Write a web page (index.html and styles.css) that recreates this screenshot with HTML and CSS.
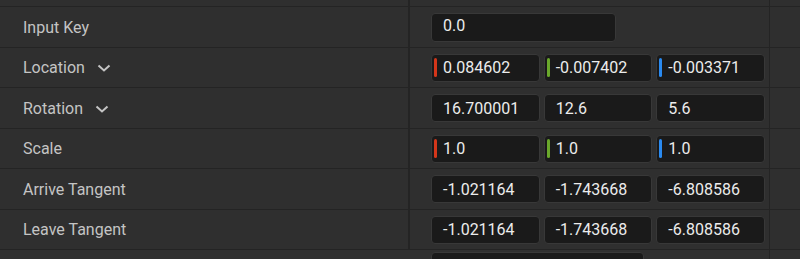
FILE: index.html
```html
<!DOCTYPE html>
<html>
<head>
<meta charset="utf-8">
<link rel="stylesheet" href="styles.css">
</head>
<body>
<div class="panel">
  <div class="row top"><div class="label"></div><div class="value"></div><div class="extra"></div></div>

  <div class="row tall">
    <div class="label">Input Key</div>
    <div class="value"><div class="box key"><span class="num">0.0</span></div></div>
    <div class="extra"></div>
  </div>

  <div class="row">
    <div class="label">Location <svg class="chev" width="14" height="8" viewBox="0 0 14 8"><path d="M1.5 1.5 L7 6.5 L12.5 1.5" fill="none" stroke="#c4c4c4" stroke-width="2"/></svg></div>
    <div class="value vec">
      <div class="box"><span class="bar r"></span><span class="num">0.084602</span></div>
      <div class="box"><span class="bar g"></span><span class="num">-0.007402</span></div>
      <div class="box"><span class="bar b"></span><span class="num">-0.003371</span></div>
    </div>
    <div class="extra"></div>
  </div>

  <div class="row tall">
    <div class="label">Rotation <svg class="chev" width="14" height="8" viewBox="0 0 14 8"><path d="M1.5 1.5 L7 6.5 L12.5 1.5" fill="none" stroke="#c4c4c4" stroke-width="2"/></svg></div>
    <div class="value vec">
      <div class="box"><span class="num">16.700001</span></div>
      <div class="box"><span class="num">12.6</span></div>
      <div class="box"><span class="num">5.6</span></div>
    </div>
    <div class="extra"></div>
  </div>

  <div class="row">
    <div class="label">Scale</div>
    <div class="value vec">
      <div class="box"><span class="bar r"></span><span class="num">1.0</span></div>
      <div class="box"><span class="bar g"></span><span class="num">1.0</span></div>
      <div class="box"><span class="bar b"></span><span class="num">1.0</span></div>
    </div>
    <div class="extra"></div>
  </div>

  <div class="row tall">
    <div class="label">Arrive Tangent</div>
    <div class="value vec">
      <div class="box"><span class="num">-1.021164</span></div>
      <div class="box"><span class="num">-1.743668</span></div>
      <div class="box"><span class="num">-6.808586</span></div>
    </div>
    <div class="extra"></div>
  </div>

  <div class="row">
    <div class="label">Leave Tangent</div>
    <div class="value vec">
      <div class="box"><span class="num">-1.021164</span></div>
      <div class="box"><span class="num">-1.743668</span></div>
      <div class="box"><span class="num">-6.808586</span></div>
    </div>
    <div class="extra"></div>
  </div>

  <div class="row last">
    <div class="label"></div>
    <div class="value"><div class="box wide"></div></div>
    <div class="extra"></div>
  </div>
</div>
</body>
</html>
```

FILE: styles.css
```css
html, body {
  margin: 0;
  padding: 0;
  background: #2f2f2f;
  overflow: hidden;
}

.panel {
  width: 800px;
  height: 259px;
  overflow: hidden;
  font-family: Roboto, "Liberation Sans", sans-serif;
}

.row {
  display: flex;
  height: 40px;
  box-sizing: border-box;
  border-bottom: 1px solid #242424;
}

.row.tall { height: 41px; }
.row.top { height: 7px; }
.row.last { height: 20px; border-bottom: none; align-items: flex-start; }

.label {
  width: 410px;
  flex: none;
  box-sizing: border-box;
  padding-left: 23px;
  border-right: 2px solid #242424;
  display: flex;
  align-items: center;
  font-size: 16px;
  color: #c4c4c4;
}

.label .chev {
  margin-left: 12px;
  margin-top: 1px;
}

.value {
  width: 360px;
  flex: none;
  box-sizing: border-box;
  border-right: 1px solid #242424;
  padding-left: 21px;
  padding-right: 4px;
  display: flex;
  align-items: center;
}

.value.vec { gap: 4px; }

.extra { flex: 1; }

.box {
  height: 28px;
  box-sizing: border-box;
  background: #1a1a1a;
  border: 1px solid #383838;
  border-radius: 4px;
  display: flex;
  align-items: center;
  padding-left: 11px;
  position: relative;
  font-size: 16px;
  color: #ececec;
}

.vec .box { flex: 1; min-width: 0; }

.box.key {
  width: 185px;
  height: 29px;
  padding-bottom: 3px;
}

.box.wide {
  width: 213px;
  margin-top: 2px;
}

.bar {
  position: absolute;
  left: 2px;
  top: 3px;
  width: 3px;
  height: 19px;
  border-radius: 2px;
}

.bar.r { background: #d4361a; }
.bar.g { background: #6aa82b; }
.bar.b { background: #2a8af0; }
```
